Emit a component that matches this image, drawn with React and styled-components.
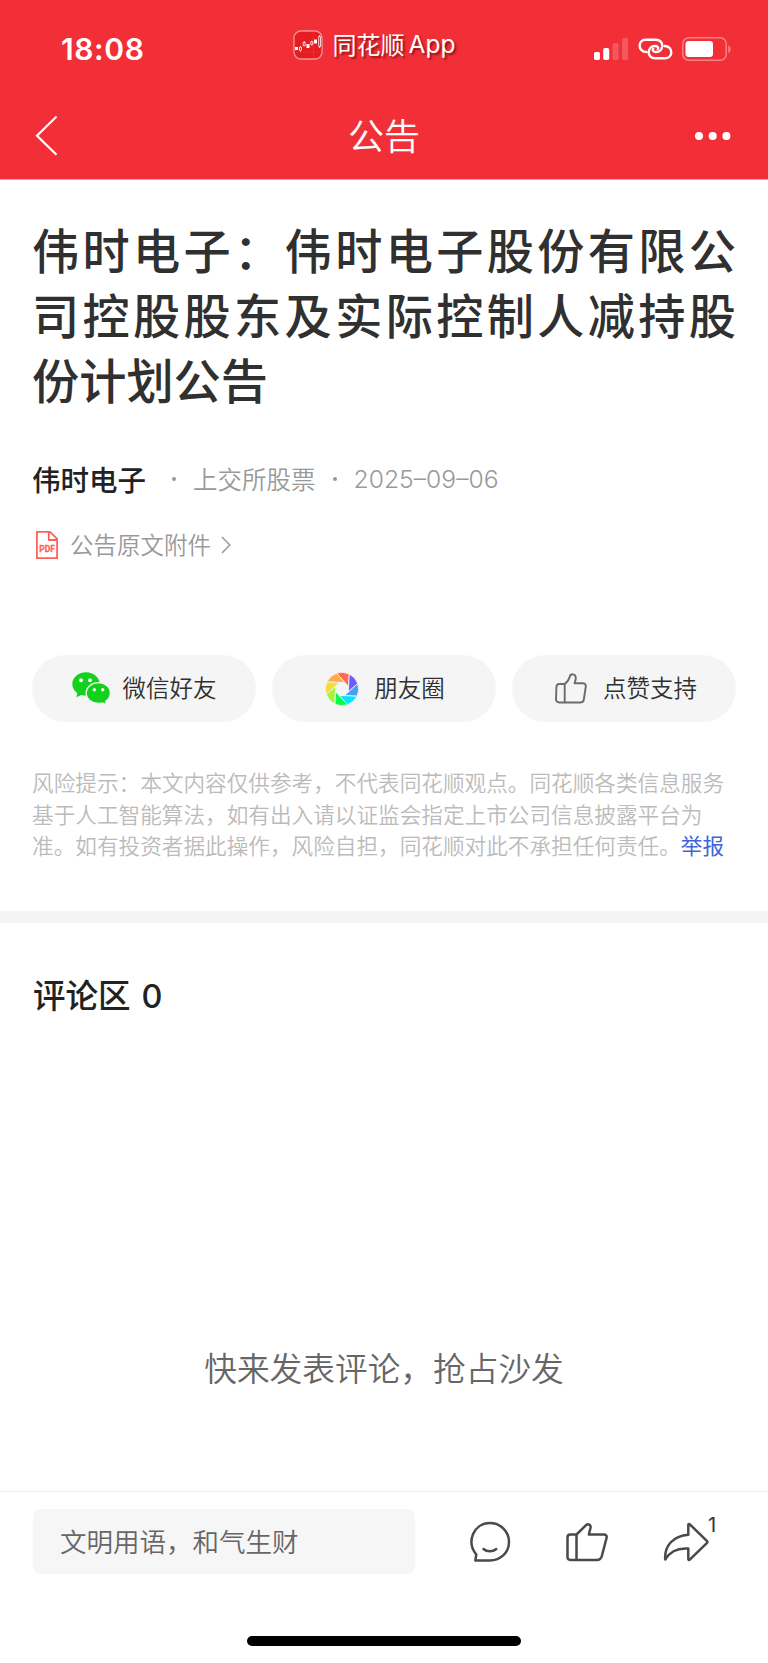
import React from 'react'
import styled, {createGlobalStyle} from 'styled-components'

const petals = ['#ff6a55', '#7059ff', '#45a0f8', '#00e5ff', '#09fb45', '#a2f53a', '#f5dc32', '#ffac45']

function StatusBar() {
  return <StatusWrapper>
    <Clock>18:08</Clock>
    <AppBadge>
      <svg width="30" height="30" viewBox="0 0 30 30" fill="none">
        <rect x="1" y="1" width="28" height="28" rx="7" fill="#e51c20" stroke="#fff" strokeOpacity=".5" strokeWidth="1.3"/>
        <path d="M20.5 2v26M2 22h26" stroke="#fff" strokeOpacity=".08"/>
        <path d="M2 17h3v3H2zM13.5 14h3v4h-3zM21 9.500h3v4h-3z" fill="#fff"/>
        <path d="M6.500 17.200h2v3h-2zM7.500 16v1.200M7.500 20.200v1.500M10.200 12.500h2v3.300h-2zM11.200 11v1.500M17.800 11.700h2v2.600h-2zM18.800 10.700v1M18.800 14.300v1.400M25.700 6.500h1.800v10h-1.800zM26.600 5v1.500M26.600 16.500v1.500" stroke="#fff" strokeWidth=".8"/>
      </svg>
      <span>同花顺</span><AppWord>App</AppWord>
    </AppBadge>
    <Signals>
      <svg width="35" height="24" viewBox="0 0 35 24" fill="#fff">
        <rect x="0" y="15" width="6" height="8" rx="1.700"/>
        <rect x="9.200" y="11" width="6" height="12" rx="1.700"/>
        <rect x="18.600" y="6" width="6" height="17" rx="1.700" opacity=".2"/>
        <rect x="28" y="1" width="6" height="22" rx="1.700" opacity=".2"/>
      </svg>
      <svg width="35" height="22" viewBox="0 0 35 22" fill="none" stroke="#fff" strokeWidth="2.400" strokeLinecap="round">
        <path d="M8.500 14C4.300 14 1.700 11 1.700 7.700 1.700 4.200 4.200 1.700 7.500 1.700H18C22 1.700 24.500 4.600 24.300 8 24 11.600 21.500 14 18 14 15.500 14 14 12.500 15.200 10.800"/>
        <path d="M26.500 8C30.700 8 33.300 11 33.300 14.200 33.300 17.600 30.800 20.200 27.500 20.200H17C13 20.200 10.500 17.300 10.700 14 11 10.500 13.500 8 17 8 19.500 8 21 9.500 19.800 11.100"/>
      </svg>
      <svg width="50" height="24" viewBox="0 0 50 24" fill="none">
        <rect x=".8" y=".8" width="43.400" height="22.400" rx="6" stroke="#fff" strokeOpacity=".4" strokeWidth="1.500"/>
        <rect x="3.500" y="4" width="27.500" height="16" rx="3.200" fill="#fff"/>
        <path d="M46.300 8.500v7.500c3-1 3-6.500 0-7.500z" fill="#fff" fillOpacity=".4"/>
      </svg>
    </Signals>
  </StatusWrapper>
}

function Navbar() {
  return <NavWrapper>
    <svg width="24" height="42" viewBox="0 0 24 42" fill="none" stroke="#fff" strokeWidth="2.200">
      <path d="M21.500 1.500 2 20.700l19.500 19"/>
    </svg>
    <NavTitle>公告</NavTitle>
    <svg width="36" height="10" viewBox="0 0 36 10" fill="#fff">
      <circle cx="4" cy="5" r="4"/><circle cx="17.700" cy="5" r="4"/><circle cx="31.400" cy="5" r="4"/>
    </svg>
  </NavWrapper>
}

function PdfIcon() {
  return <svg width="22" height="28" viewBox="0 0 22 28" fill="none" stroke="#ff6159" strokeWidth="1.800">
    <path d="M.9.900h13.200l7 7v19.200H.9zM12.800 1v8h8.200"/>
    <text x="11" y="21.300" textAnchor="middle" textLength="15.500" lengthAdjust="spacingAndGlyphs" fontFamily="Roboto" fontWeight="700" fontSize="9.500" fill="#ff6159" stroke="#ff6159" strokeWidth=".3">PDF</text>
  </svg>
}

function WechatIcon() {
  return <svg width="39" height="33" viewBox="0 0 39 33" fill="#14d11f">
    <path d="M14 .3C6.300.300.300 5.500.300 12c0 3.700 2 7 5 9.200L4.400 25.300l5-2.400c1.500.400 3 .600 4.600.600C21.700 23.500 27.700 18.300 27.700 12S21.700.300 14 .3z"/>
    <path d="M26.500 10.700c-6.900 0-12.300 4.600-12.300 10.400s5.400 10.400 12.300 10.400c1.500 0 2.900-.2 4.200-.600l4 2-1-3.500c3-1.900 4.700-4.900 4.700-8.300 0-5.800-5-10.400-11.900-10.400z" stroke="#f5f5f5" strokeWidth="1.300"/>
    <g fill="#f5f5f5"><circle cx="9" cy="8.200" r="2"/><circle cx="18" cy="8.200" r="2"/><circle cx="22.300" cy="17.800" r="1.700"/><circle cx="30.700" cy="17.800" r="1.700"/></g>
  </svg>
}

function MomentsIcon() {
  return <svg width="34" height="34" viewBox="-17 -17 34 34">
    {petals.map((color, i) => (
      <path key={color} transform={`rotate(${i * 45})`} fill={color} stroke="#f5f5f5" strokeWidth=".8"
        d="M-5.500-15.700A16.600 16.600 0 0 1 7.200-15L6.500-2.600z"/>
    ))}
    <circle r="6.500" fill="#f5f5f5"/>
  </svg>
}

function ThumbIcon() {
  return <svg width="32" height="31" viewBox="0 0 32 31" fill="none" stroke="#6b6b6b" strokeWidth="1.900" strokeLinejoin="round">
    <path d="M9.700 11c3-2 4.300-4.500 5-7.200C15.500.300 20.700.300 20.800 5c0 2-.700 3.500-1.300 5.300h8.300c2 0 3.200 1.400 3 3.200l-2 13c-.3 1.900-1.500 3-3.300 3H4.200c-2 0-3.200-1.200-3.200-3L1.400 14c.1-2 1.100-3 3-3zM9.700 11v18.500"/>
  </svg>
}

function ShareRow() {
  return <ShareWrapper>
    <ShareButton $gap={12}><WechatIcon/><span>微信好友</span></ShareButton>
    <ShareButton $gap={15} $shift={2}><MomentsIcon/><span>朋友圈</span></ShareButton>
    <ShareButton $gap={16} $shift={4}><ThumbIcon/><span>点赞支持</span></ShareButton>
  </ShareWrapper>
}

function Article() {
  return <ArticleWrapper>
    <Headline>伟时电子：伟时电子股份有限公司控股股东及实际控制人减持股份计划公告</Headline>
    <Meta>
      <Stock>伟时电子</Stock>
      <Dot/>
      <Market>上交所股票</Market>
      <Dot/>
      <PublishDate>2025–09–06</PublishDate>
    </Meta>
    <Attachment>
      <PdfIcon/>
      <span>公告原文附件</span>
      <svg width="10" height="18" viewBox="0 0 10 18" fill="none" stroke="#999" strokeWidth="1.500"><path d="M1 1l7.800 8L1 17"/></svg>
    </Attachment>
    <ShareRow/>
    <Risk>
      风险提示：本文内容仅供参考，不代表同花顺观点。同花顺各类信息服务基于人工智能算法，如有出入请以证监会指定上市公司信息披露平台为准。如有投资者据此操作，风险自担，同花顺对此不承担任何责任。<Report>举报</Report>
    </Risk>
  </ArticleWrapper>
}

function BottomBar() {
  return <BottomWrapper>
    <Tools>
      <CommentInput>文明用语，和气生财</CommentInput>
      <Actions>
        <svg width="42" height="42" viewBox="0 0 42 42" fill="none" stroke="#4a4a4a" strokeWidth="2.500" strokeLinejoin="round" strokeLinecap="round">
          <path d="M6.300 39.500l1-6C-3 21 4.500 2 21 2c10.600 0 19 8.500 19 19s-8.400 18.500-19 18.500z"/>
          <path d="M14.500 28c3.300 3 9.300 3 12.800 0"/>
        </svg>
        <svg width="42" height="40" viewBox="0 0 42 40" fill="none" stroke="#4a4a4a" strokeWidth="2.500" strokeLinejoin="round">
          <path d="M10.500 12.500L19.800 3.300c2.300-2.100 5.300-.5 4.700 2.500l-1.600 6.700h15c2.100 0 3.200 1.400 2.700 3.300l-4.700 18c-.9 3-2.200 4.100-5 4.100H4.300c-1.800 0-2.800-1-2.800-2.800V15.300c0-1.800 1-2.800 2.800-2.800zM10.500 12.500v25.400"/>
        </svg>
        <ShareCount>
          <svg width="46" height="40" viewBox="0 0 46 40" fill="none" stroke="#4a4a4a" strokeWidth="2.500" strokeLinejoin="round">
            <path d="M25.300 2.800c0-1 .8-1.100 1.500-.500l17 16.500c.9.900.9 1.500 0 2.300l-17 16.500c-.7.700-1.500.4-1.500-.500V26.500C14.500 25.700 7 29.300 2.200 37.500 1.200 23.500 10.500 13.800 25.300 12.700z"/>
          </svg>
          <Count>1</Count>
        </ShareCount>
      </Actions>
    </Tools>
    <HomeIndicator/>
  </BottomWrapper>
}

export default function App() {
  return <Page>
    <GlobalStyle/>
    <Header>
      <StatusBar/>
      <Navbar/>
    </Header>
    <Article/>
    <Comments>
      <CommentTitle>评论区<span>0</span></CommentTitle>
      <Empty>快来发表评论，抢占沙发</Empty>
    </Comments>
    <BottomBar/>
  </Page>
}

const GlobalStyle = createGlobalStyle`
* {
  box-sizing: border-box;
}
body {
  margin: 0;
  background: #fff;
  font-family: Inter, "Noto Sans CJK SC", sans-serif;
  text-spacing-trim: space-all;
}
svg {
  display: block;
  flex: none;
}
h1, h2, p {
  margin: 0;
}
`;

const Page = styled.div`
width: 768px;
height: 1663px;
display: flex;
flex-direction: column;
overflow: hidden;
`;

const Header = styled.header`
height: 180px;
flex: none;
background: #f22f37;
border-bottom: 1px solid #f9a0a4;
color: #fff;
`;

const StatusWrapper = styled.div`
height: 94px;
display: grid;
grid-template-columns: 1fr auto 1fr;
padding: 0 36px 0 61px;
`;

const Clock = styled.div`
margin-top: 31px;
font-size: 30px;
line-height: 36px;
font-weight: 600;
letter-spacing: 0.6px;
`;

const AppBadge = styled.div`
height: 30px;
margin-top: 30px;
margin-right: 45px;
display: flex;
align-items: center;
font-family: "Noto Sans CJK SC", sans-serif;
font-size: 24px;
line-height: 30px;
text-shadow: 2px 2px 2px rgba(90, 0, 0, 0.6);
svg {
  margin-right: 10px;
}
span {
  margin-top: -2px;
}
`;

const AppWord = styled.span`
font-family: Inter, sans-serif;
font-size: 24.500px;
margin-left: 4px;
`;

const Signals = styled.div`
height: 24px;
margin-top: 37px;
display: flex;
align-items: center;
justify-content: flex-end;
gap: 9px;
`;

const NavWrapper = styled.nav`
height: 83px;
display: flex;
align-items: center;
justify-content: space-between;
padding: 0 37px 0 35px;
`;

const NavTitle = styled.h1`
font-size: 36px;
line-height: 50px;
font-weight: 350;
margin: 2px 0 0 14px;
`;

const ArticleWrapper = styled.main`
height: 731px;
flex: none;
padding: 39px 32px 0;
`;

const Headline = styled.h2`
font-size: 47.200px;
line-height: 65px;
font-weight: 500;
color: #303030;
text-align: justify;
`;

const Meta = styled.div`
height: 40px;
margin-top: 45px;
display: flex;
align-items: center;
font-size: 24.500px;
font-weight: 350;
color: #999;
`;

const Stock = styled.span`
font-size: 28.500px;
font-weight: 500;
color: #222;
margin: -1px 9px 0 0;
`;

const Market = styled.span`
margin-top: -2px;
`;

const Dot = styled.i`
width: 4px;
height: 4px;
margin: 0 17px;
border-radius: 50%;
background: #999;
`;

const PublishDate = styled.span`
font-size: 24.700px;
`;

const Attachment = styled.div`
height: 32px;
margin-top: 30px;
padding-left: 4px;
display: flex;
align-items: center;
font-size: 23.500px;
font-weight: 350;
color: #999;
gap: 12px;
svg:last-child {
  margin-left: -2px;
}
span {
  margin-top: -2px;
}
`;

const ShareWrapper = styled.div`
margin-top: 94px;
display: grid;
grid-template-columns: repeat(3, 1fr);
gap: 16px;
`;

const ShareButton = styled.div`
height: 67px;
display: flex;
align-items: center;
justify-content: center;
gap: ${props => props.$gap}px;
padding-left: ${props => props.$shift || 0}px;
border-radius: 34px;
background: #f5f5f5;
color: #303030;
font-size: 23.500px;
font-weight: 350;
span {
  margin-top: -3px;
}
`;

const Risk = styled.p`
margin-top: 44px;
font-family: "Noto Sans CJK SC", sans-serif;
font-size: 21.630px;
line-height: 31.500px;
font-weight: 350;
color: #bbb;
`;

const Report = styled.span`
display: inline-block;
line-height: 28px;
color: #3c64dc;
font-weight: 400;
`;

const Comments = styled.section`
height: 580px;
flex: none;
border-top: 12px solid #f4f4f4;
`;

const CommentTitle = styled.h2`
margin: 50px 0 0 33px;
font-size: 32.500px;
line-height: 48px;
font-weight: 500;
color: #222;
span {
  margin-left: 11px;
}
`;

const Empty = styled.p`
margin-top: 324px;
text-align: center;
font-size: 32.700px;
line-height: 48px;
font-weight: 350;
color: #666;
`;

const BottomWrapper = styled.footer`
height: 172px;
flex: none;
border-top: 1px solid #eee;
padding: 17px 0 0 33px;
`;

const Tools = styled.div`
display: flex;
align-items: center;
`;

const CommentInput = styled.div`
width: 382px;
height: 65px;
padding: 0 0 2px 27px;
display: flex;
align-items: center;
border-radius: 8px;
background: #f6f6f6;
color: #666;
font-size: 26.500px;
font-weight: 350;
`;

const Actions = styled.div`
margin-left: 54px;
display: flex;
align-items: center;
gap: 55px;
color: #333;
`;

const ShareCount = styled.div`
position: relative;
`;

const Count = styled.sup`
position: absolute;
left: 45px;
top: -7px;
font-size: 20px;
line-height: 20px;
font-weight: 400;
`;

const HomeIndicator = styled.div`
width: 274px;
height: 10px;
margin: 62px 0 0 214px;
border-radius: 5px;
background: #000;
`;
